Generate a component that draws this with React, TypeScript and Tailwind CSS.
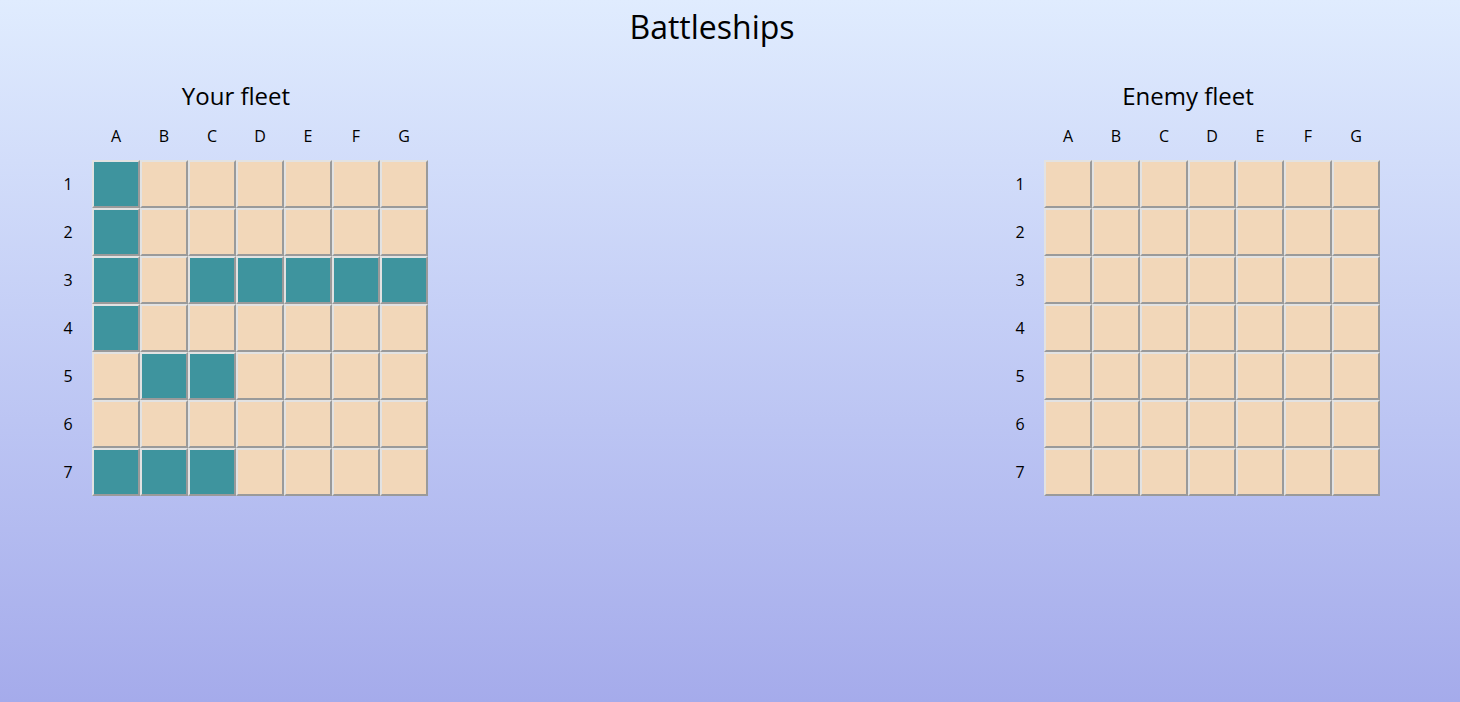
import React from "react";

const cols = ["A", "B", "C", "D", "E", "F", "G"];
const rows = [1, 2, 3, 4, 5, 6, 7];

// ship cells for the player's board
const ships = new Set([
  "A1", "A2", "A3", "A4",
  "C3", "D3", "E3", "F3", "G3",
  "B5", "C5",
  "A7", "B7", "C7",
]);

function Board({ title, showShips }: { title: string; showShips: boolean }) {
  return (
    <div className="flex flex-col items-center">
      <h2 className="text-[24px] leading-[32px] mt-[75px]">{title}</h2>
      <div className="grid grid-cols-[48px_repeat(7,48px)]">
        <div className="h-12" />
        {cols.map((c) => (
          <div key={c} className="h-12 flex items-center justify-center text-[16px]">
            {c}
          </div>
        ))}
        {rows.map((r) => (
          <React.Fragment key={r}>
            <div className="h-12 flex items-center justify-center text-[16px]">{r}</div>
            {cols.map((c) => {
              const ship = showShips && ships.has(c + r);
              return (
                <div
                  key={c + r}
                  className={`h-12 w-12 border-2 border-t-[#e2e2e2] border-l-[#e2e2e2] border-b-[#9a9a9a] border-r-[#9a9a9a] ${
                    ship ? "bg-[#3e949e]" : "bg-[#f2d7b9]"
                  }`}
                />
              );
            })}
          </React.Fragment>
        ))}
      </div>
    </div>
  );
}

export default function App() {
  return (
    <div
      className="min-h-[702px] w-full bg-gradient-to-b from-[#e0ecfe] to-[#a5abeb] text-black"
      style={{ fontFamily: '"Open Sans", "Noto Sans", sans-serif' }}
    >
      <div className="w-[1424px]">
        <h1 className="text-[32px] leading-[44px] text-center pt-[5px]">Battleships</h1>
        <div className="flex justify-between px-[44px] -mt-[44px]">
          <Board title="Your fleet" showShips />
          <Board title="Enemy fleet" showShips={false} />
        </div>
      </div>
    </div>
  );
}
